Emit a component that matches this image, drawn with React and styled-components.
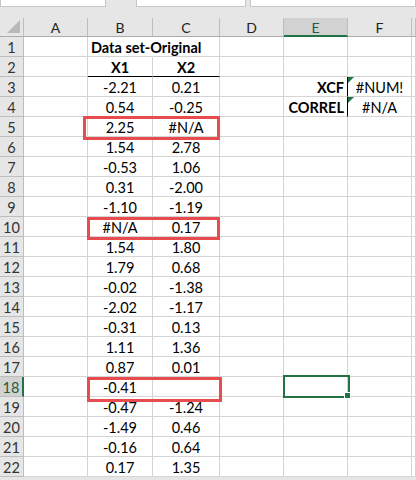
import styled, { createGlobalStyle } from 'styled-components'

const GlobalStyle = createGlobalStyle`
  html, body {
    margin: 0;
    padding: 0;
    background: #ffffff;
  }
  body {
    font-family: Lato, "Liberation Sans", sans-serif;
    overflow: hidden;
  }
`

const green = '#217346'

const colB = ['-2.21', '0.54', '2.25', '1.54', '-0.53', '0.31', '-1.10', '#N/A', '1.54', '1.79',
  '-0.02', '-2.02', '-0.31', '1.11', '0.87', '-0.41', '-0.47', '-1.49', '-0.16', '0.17']
const colC = ['0.21', '-0.25', '#N/A', '2.78', '1.06', '-2.00', '-1.19', '0.17', '1.80', '0.68',
  '-1.38', '-1.17', '0.13', '1.36', '0.01', '', '-1.24', '0.46', '0.64', '1.35']

const Page = styled.div`
  width: 416px;
  height: 480px;
  background: #e6e6e6;
  overflow: hidden;
`

const TopBar = styled.div`
  display: flex;
  height: 18px;
  align-items: flex-start;
`

const InputBox = styled.div`
  height: 7px;
  box-sizing: border-box;
  background: #fff;
  border: 1px solid #c6c6c6;
  border-top: 0;
  width: ${p => p.$w};
  margin-left: ${p => p.$ml || '0'};
  flex: ${p => (p.$grow ? 1 : 'none')};
`

const Sheet = styled.div`
  position: relative;
  display: grid;
  grid-template-columns: 24px 64px 65px 67px 64px 64px 64px 1fr;
  grid-template-rows: 19px repeat(22, 20px);
  background: #fff;
`

const Corner = styled.div`
  background: #e6e6e6;
  border-right: 1px solid #bdbdbd;
  border-bottom: 1px solid #ababab;
  box-sizing: border-box;
  position: relative;
  &::after {
    content: '';
    position: absolute;
    right: 3px;
    bottom: 3px;
    width: 0;
    height: 0;
    border-left: 13px solid transparent;
    border-bottom: 13px solid #b9b9b9;
  }
`

const ColHead = styled.div`
  background: ${p => (p.$sel ? '#d2d2d2' : '#e6e6e6')};
  border-right: 1px solid #bdbdbd;
  border-bottom: ${p => (p.$sel ? `2px solid ${green}` : '1px solid #ababab')};
  box-sizing: border-box;
  display: flex;
  align-items: center;
  justify-content: center;
  font-size: 14px;
  color: ${p => (p.$sel ? '#1e5e3a' : '#222')};
  padding-top: ${p => (p.$sel ? '1px' : '0')};
`

const RowHead = styled.div`
  background: ${p => (p.$sel ? '#d2d2d2' : '#e6e6e6')};
  border-right: ${p => (p.$sel ? `2px solid ${green}` : '1px solid #bdbdbd')};
  border-bottom: 1px solid #bdbdbd;
  box-sizing: border-box;
  display: flex;
  align-items: center;
  justify-content: center;
  padding-top: 1px;
  font-size: 14.5px;
  color: ${p => (p.$sel ? '#1e5e3a' : '#333')};
`

const Cell = styled.div`
  box-sizing: border-box;
  border-right: 1px solid ${p => p.$rb || '#d4d4d4'};
  border-bottom: 1px solid ${p => p.$bb || '#d4d4d4'};
  font-size: 14.5px;
  font-weight: ${p => (p.$bold ? 700 : 400)};
  color: #000;
  line-height: 21px;
  text-align: ${p => p.$align || 'center'};
  padding: ${p => (p.$align === 'right' ? '0 3px 0 0' : p.$align === 'left' ? '0 0 0 3px' : '0')};
  white-space: nowrap;
  overflow: ${p => (p.$spill ? 'visible' : 'hidden')};
  position: relative;
  z-index: ${p => (p.$spill ? 1 : 0)};
`

const ErrorFlag = styled.span`
  position: absolute;
  left: 0;
  top: 0;
  width: 0;
  height: 0;
  border-top: 6px solid ${green};
  border-right: 6px solid transparent;
`

const RedBox = styled.div`
  position: absolute;
  border: 3px solid #e84c4f;
  box-sizing: border-box;
  pointer-events: none;
  z-index: 2;
`

const Selection = styled.div`
  position: absolute;
  left: 283px;
  top: 357px;
  width: 67px;
  height: 23px;
  border: 2px solid ${green};
  box-sizing: border-box;
  z-index: 2;
  &::after {
    content: '';
    position: absolute;
    right: -3px;
    bottom: -3px;
    width: 5px;
    height: 5px;
    background: ${green};
    border: 1px solid #fff;
  }
`

const cols = ['A', 'B', 'C', 'D', 'E', 'F', '']

const extra = {
  3: { E: { text: 'XCF', bold: true, align: 'right', rb: '#000' }, F: { text: '#NUM!', flag: true } },
  4: { E: { text: 'CORREL', bold: true, align: 'right', rb: '#000' }, F: { text: '#N/A', flag: true } },
}

const renderRow = (r) => {
  const cells = []
  cells.push(<RowHead key="h" $sel={r === 18}>{r}</RowHead>)
  cols.forEach((c) => {
    let props = { text: '' }
    if (r === 1 && c === 'B') props = { text: 'Data set-Original', bold: true, align: 'left', spill: true, rb: '#fff' }
    if (r === 2 && (c === 'B' || c === 'C')) props = { text: c === 'B' ? 'X1' : 'X2', bold: true, bb: '#000' }
    if (r >= 3 && c === 'B') props = { text: colB[r - 3] }
    if (r >= 3 && c === 'C') props = { text: colC[r - 3] }
    if (extra[r] && extra[r][c]) props = extra[r][c]
    cells.push(
      <Cell
        key={c || 'g'}
        $bold={props.bold}
        $align={props.align}
        $spill={props.spill}
        $rb={props.rb}
        $bb={props.bb}
      >
        {props.flag && <ErrorFlag />}
        {props.text}
      </Cell>
    )
  })
  return cells
}

const App = () => {
  const rows = Array.from({ length: 22 }, (_, i) => i + 1)
  return (
    <Page>
      <GlobalStyle />
      <TopBar>
        <InputBox $w="106px" />
        <InputBox $w="110px" $ml="30px" />
        <InputBox $grow $ml="4px" />
      </TopBar>
      <Sheet>
        <Corner />
        {cols.map((c, i) => (
          <ColHead key={i} $sel={c === 'E'}>{c}</ColHead>
        ))}
        {rows.map(r => renderRow(r))}
        <RedBox style={{ left: 83, top: 98, width: 137, height: 24 }} />
        <RedBox style={{ left: 87, top: 199, width: 133, height: 23 }} />
        <RedBox style={{ left: 87, top: 359, width: 135, height: 25 }} />
        <Selection />
      </Sheet>
    </Page>
  )
}

export default App
